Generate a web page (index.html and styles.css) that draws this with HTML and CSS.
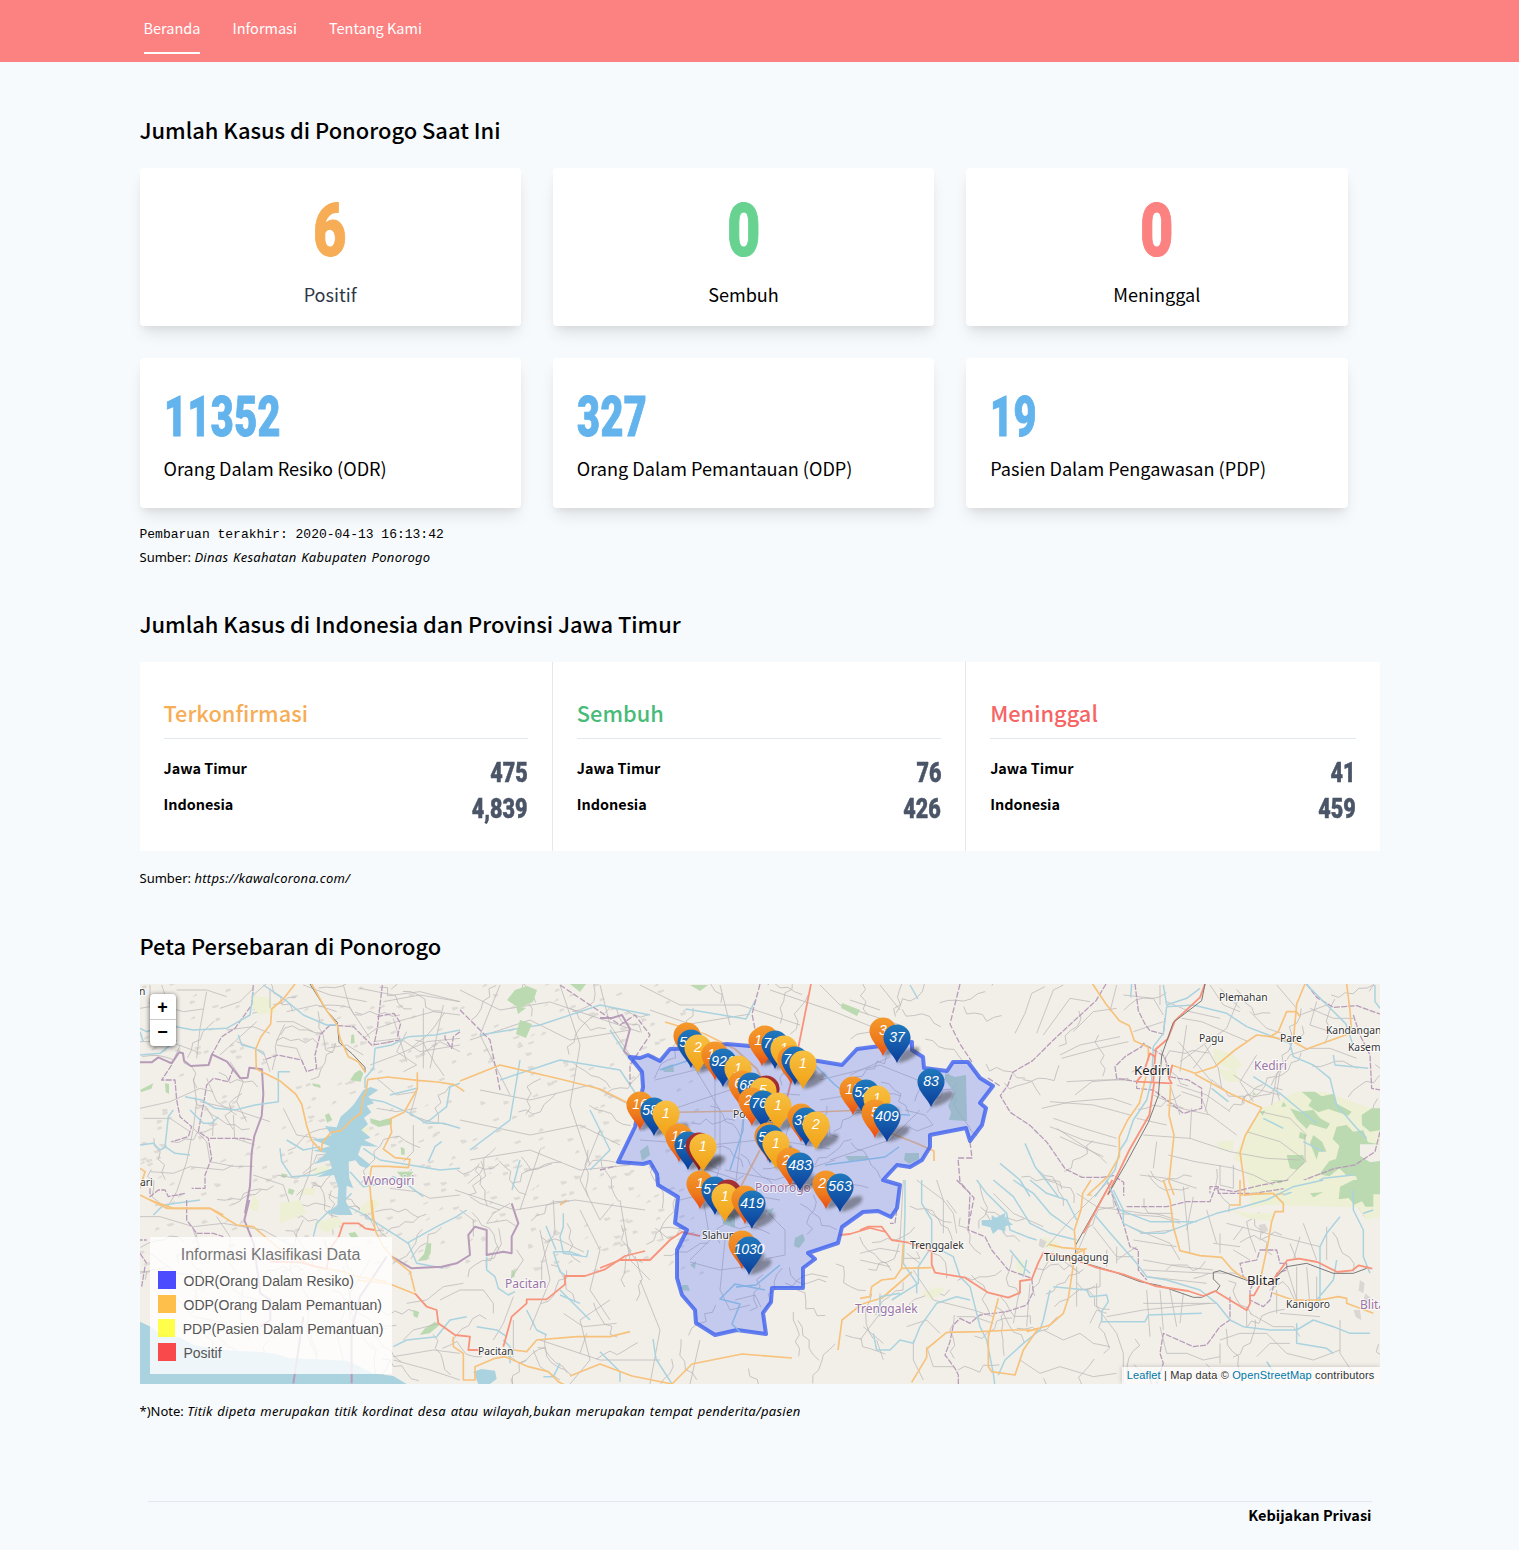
FILE: index.html
```html
<!DOCTYPE html>
<html lang="id">
<head>
<meta charset="utf-8">
<title>Ponorogo Covid-19</title>
<link rel="stylesheet" href="styles.css">
</head>
<body>
<header class="topbar">
  <nav class="wrap nav">
    <a class="nav-link active">Beranda</a>
    <a class="nav-link">Informasi</a>
    <a class="nav-link">Tentang Kami</a>
  </nav>
</header>
<main class="wrap">
  <h2 class="title"><span>Jumlah Kasus di Ponorogo Saat Ini</span></h2>
  <section class="cards">
    <div class="card big"><b class="num orange">6</b><span class="gray">Positif</span></div>
    <div class="card big"><b class="num green">0</b><span>Sembuh</span></div>
    <div class="card big"><b class="num red">0</b><span>Meninggal</span></div>
    <div class="card"><b class="num">11352</b><span>Orang Dalam Resiko (ODR)</span></div>
    <div class="card"><b class="num">327</b><span>Orang Dalam Pemantauan (ODP)</span></div>
    <div class="card"><b class="num">19</b><span>Pasien Dalam Pengawasan (PDP)</span></div>
  </section>
  <p class="updated">Pembaruan terakhir: 2020-04-13 16:13:42</p>
  <p class="source">Sumber: <em>Dinas Kesahatan Kabupaten Ponorogo</em></p>

  <h2 class="title second"><span>Jumlah Kasus di Indonesia dan Provinsi Jawa Timur</span></h2>
  <section class="panel">
    <div class="stat">
      <h3 class="c-orange">Terkonfirmasi</h3>
      <div class="row"><span>Jawa Timur</span><b>475</b></div>
      <div class="row"><span>Indonesia</span><b>4,839</b></div>
    </div>
    <div class="stat">
      <h3 class="c-green">Sembuh</h3>
      <div class="row"><span>Jawa Timur</span><b>76</b></div>
      <div class="row"><span>Indonesia</span><b>426</b></div>
    </div>
    <div class="stat">
      <h3 class="c-red">Meninggal</h3>
      <div class="row"><span>Jawa Timur</span><b>41</b></div>
      <div class="row"><span>Indonesia</span><b>459</b></div>
    </div>
  </section>
  <p class="source after-panel">Sumber: <em>https://kawalcorona.com/</em></p>

  <h2 class="title third"><span>Peta Persebaran di Ponorogo</span></h2>
  <section class="map">
    <svg class="canvas" viewBox="140 984 1240 400" width="1240" height="400">
      <defs>
        <linearGradient id="g-blue" x1="0" y1="0" x2="0" y2="1"><stop offset="0" stop-color="#2079bd"/><stop offset="1" stop-color="#0a3d9b"/></linearGradient>
        <linearGradient id="g-orange" x1="0" y1="0" x2="0" y2="1"><stop offset="0" stop-color="#f49a2b"/><stop offset=".6" stop-color="#ee7a1b"/><stop offset="1" stop-color="#e84a17"/></linearGradient>
        <linearGradient id="g-gold" x1="0" y1="0" x2="0" y2="1"><stop offset="0" stop-color="#f7c043"/><stop offset="1" stop-color="#f2a012"/></linearGradient>
        <linearGradient id="g-red" x1="0" y1="0" x2="0" y2="1"><stop offset="0" stop-color="#a83236"/><stop offset="1" stop-color="#7f1e24"/></linearGradient>
        <filter id="soft" x="-50%" y="-50%" width="200%" height="200%"><feGaussianBlur stdDeviation="1.6"/></filter>
      </defs>
      <rect x="140" y="984" width="1240" height="400" fill="#f2efe9"/>
      <g id="texture"></g>

      <!-- Wonogiri and the reservoir -->
      <g transform="translate(130 975) scale(.33333)">
        <path class="farm" d="M370 60l50 10 20 40-50 10-30-30zM670 440l50 20-10 20-40-5zM550 580l40-10 10 20-50 15zM520 640l40 0-10 20-40 0zM690 700l30-30 30 10-20 30-40 10zM370 660l20 20-10 30-20-10z"/>
        <path class="wood" d="M690 285l10 10-8 25-32-4 14-22zM720 430l30 8 10-4 26-6 0 20-40 8-24-12zM800 590l50 0-8 14-24 6zM585 420l12-5 10 20-16 8zM546 325l24 4 2 10-22-6zM30 345l40-20-6 16-30 10zM455 595l16 4-6 10-12-4zM812 515l12 6 0 18-10 0zM664 180l8-2 2 26-12 2zM476 640l18 6-6 14-14-6zM105 325l12 2 0 30-10-6z"/>
        <path class="minor" d="M30 100l60-10 70 20 60-8M60 30l0 60M95 30l20 60 10 70M140 45l90 0 60 20M230 50l-20 110-10 90M30 200l90 0 80 30M270 100l60-20 40-40M290 165l80-10 50 20M320 200l80 30 20 60M300 260l40 60-20 60 30 60M210 380l90 20 120 40M230 310l30 70 60 40M190 460l40 40 10 60 70 14 60 0M60 590l70 5 50-20 100 10 30-15M190 460l-20 100-30 90-30 50M190 310l10 70-10 80M30 400l90-20 90-40 40 10M40 430l80 0 60 40M310 420l4 70 60 20M460 400l40 80 60 10M550 500l-10 90-30 80-10 50M440 600l60 10 60-30M370 600l90 30 20 60M520 30l80 30 110 20M640 30l20 70 60 90M690 40l100 20 80-10 120 30M760 80l110-20 120 20M700 190l40-30 60-20 110-30 80 10M730 200l80-10 60 40 120-20M720 270l80-30 90-40 100-10M830 170l-30 60 60 40-40 20M870 240l60-40 60 30M740 400l60 10 60-10M860 350l-20 70 60 20 60 10M740 310l60 50 60-10M850 450l0 80-30 30M780 640l80 10 40 20 90-10M380 140l-110 100M470 110l90-20 60 20M420 100l0-60M440 140l50 0 60 30M590 220l60-10 50 30M440 210l60 10 20 50M880 100l0 180M940 90l-40 190M790 130l40 130"/>
        <path class="border" d="M370 30l-5 60-50 70-40 25-30 55M245 240l-10 30M757 30l-15 130-10 50M742 125l50-10 20 30-10 40M600 150l70 5 60 60M600 150l-30 30-15 60 5 40-30 10-15-35-70-15-45 15M730 210l80-15M990 170l-20 15-5 35-20-30 0-15M125 270l-30 45 40 0 5 60 10 50 35 30-10 30-50 15M310 280l-15 40-45-10-20 20-10 60-15 80 30 20 10 60-20 50 0 40-40 0M240 490l60 0 40 0 25 5M60 640l0 25 25-20 20 0 10 20 50-10"/>
        <path class="border solid" d="M30 262l35 0 20-15 40 18 22-33 12 3 3 22 20 16 54-3 10-32 45 22 40 50 22-2 5-30 38 5 4 75-5 65-22 60-8 50-5 100-15 82"/>
        <path class="river" d="M30 240l60-5 50-40M30 160l20 10 60-20 80 15 100-5 70-40 10-70M30 170l10 30M400 30l60 40 60 50 70 30 30 0M325 180l10 30 40 10 30 20M735 220l50-10 50-25 80-5 75-15M735 220l-5 60-25 30 0 30M480 290l-35 0 0 90-70 10-60 15-60-5-40-25-50-10M130 405l-15 20-10 90 30 20 45 5M30 510l40-5 20 20 20-10M470 495l50 30 50-10M450 520l5 40 30 45 70-5 60-20M780 360l80-20M700 370l60 10 80 35 50 30 50 0 50 15M990 325l-30 10-10 60-50 40-10 5M700 520l50 35 90 15 90 15 60-5M660 590l40 45 60-10 30-20 50 30 40 30M895 560l20-45 20-15M70 720l30-30 110-15M180 405l40 40 25 0 20-20"/>
        <path class="water" d="M700 345L722 336 745 345 715 365 732 385 710 392 724 412 702 428 714 448 694 465 722 488 702 495 745 515 694 512 684 540 722 570 710 580 690 572 676 556 656 560 658 610 670 640 700 652 650 632 648 680 668 720 625 720 590 715 622 690 625 640 612 600 560 607 606 580 598 556 550 568 590 534 548 527 600 514 545 493 580 490 604 480 585 453 620 457 632 425 655 405 672 388z"/>
        <path class="rail" d="M540 27l50 80 32 35 5 60 40 35 38 40 0 15"/>
        <path class="second" d="M495 27l-35 45-35 30-3 45-30 40-15 35 2 60 70 35 48 40 18 30 15 65 15 45 28 30 5-25 25-30 30-5 35-35 25-18 5-45 10-15 5-40 60-8 90 10 60 5 50 8 30 20M705 290l-20-30-30-15-25-55-8-40-32-43-45-80M862 292l0 50-40 70-42 20 5 40-25 50 35 26 45 5-5 25-60-4-50 0-7 40 10 120M30 660l80 40 130 0 40 20M30 580l15 10-15 50"/>
      </g>

      <!-- south-west coast and Pacitan -->
      <g transform="translate(130 1200) scale(.33333)">
        <path class="water" d="M30 365L62 380 90 400 150 412 190 435 280 450 380 455 440 462 480 475 560 478 650 482 690 500 730 520 790 528 830 552 30 552zM1030 515l25-8 40 5 5 25-20 15-35 0z"/>
        <path class="farm" d="M450 10l60-10 20 40-80 30zM550 70l70-20 20 20-50 30z"/>
        <path class="wood" d="M890 130l14 0-2 30-12 20-28 4 20-22zM885 385l30-20 14 10-30 25-30 5zM850 330l18 6-6 18-12-6zM655 100l20-4 10 14-20 6zM1145 210l10 2-2 20-10 0z"/>
        <path class="minor" d="M0 50l90 0 100 30 90-10 120 20 90 50M190 90l20 60 30 40M260 50l40 60 0 80 40 60-10 100 30 70M60 160l80 60 120 10 80 60 180 40M100 250l90 100 100 20M520 60l-20 40-20 110 60 90-10 100 30 70M640 200l20 90-40 110 20 80M720 180l-60 100 10 100 60 70M990 30l40 30 0 50M1070 70l60-10 30 20M1140 10l-50 30-20 30M1110 30l-60-20-30-20M1160 150l20 30-40 60M1270 0l5 100-20 30-20 60 0 60M830 310l60-10 50-40 60-10M930 300l60-30 70 0 30 40 0 30M820 420l30-30 80-20M790 470l120-20 80 10M790 480l110 30 90 30M1150 290l-30 80-30 50M1150 360l0 110M1410 60l40-50M1300 340l60 40 100-10M1210 450l20 50 60 40M1370 400l-20 60M1050 460l40-10 30 20"/>
        <path class="river" d="M635 10l30-30M600 30l-40 40-10 40M635 10l60 30 140 90 25 60 80 15M830 130l90-50 60-30 30-20M1300 40l0 40-10 30 10 50 70 10 5-20M1270 155l20 60 20 15M1270 155l50 0 40 15M1070 170l0 40 25 20 10 35 30 20 20-10M790 440l40-20 90-10 40-50 50-10M1040 380l60 10 30 20M1190 330l30 60 30 15M1290 285l60 25M1240 530l30 0 20-40M1410 455l60 60 0 30M1140 490l0-50-20-20"/>
        <path class="border solid" d="M358 0l-15 60 28 70 20 150 30 20 0 60-30 20M785 170l60 35 90-5 45-10 40-25-5-60 20-25 35 10 0 75 50-10 25 5 0-50 20-40-20-60M770 170l-40 60-40 60-25 100 0 160M520 350l-30 200"/>
        <path class="border" d="M170 0l0 60 30 40 50 0 30 10M20 120l30 0M30 160l20 30M45 200l-10 60"/>
        <path class="second" d="M60 0l70 25 110 0 80 50 50 5 70 60 30 20 80 40 90 15 40 15 90 15M725 0l10 90 25 50 30 35 50 40 15 60M680 240l100 12 75 30M970 410l0 30 30 20 0 80 35 0 0-40 60-25 30-5 70 30 60 15 30 30 20 10M1150 450l40 5 30-35 120-10 100 0 60-15M1310 0l-20 15"/>
        <path class="primary" d="M627 108l13-38 45 0 20 15 28 5M855 280l35 40 30 10 5 40 50 35 45 5-5 40 35 0M1120 440l25-90 45-40 0-12 60 0 55-45 0-25 60 0 60-20 60-40 60-15M420 185l90 2 80 20 10-60 28-40"/>
      </g>

      <!-- area between Pacitan and Ponorogo -->
      <g>
        <path class="minor" d="M460 990l40 20 50-8 60 20 30 10M470 1040l60-20 40 20 60-10M480 1090l50 10 60-15 40 20M460 1120l70 15 50-10 40 20M470 1160l60-10 50 20 50-5M455 1190l60 20 60-10 70 10M540 1230l10 50-20 50M580 1210l20 40-10 40 20 30M620 1200l10 60 20 20M610 1300l-30 20 10 40-20 24M640 1280l20 50-10 54M540 1340l60 20 60 0M700 1340l-10 44M500 985l-20 50 30 60M560 985l20 60-10 60 20 60M600 985l10 40 20 30M640 985l40 20 60 0 60 20M650 1010l40 14 60-10M720 985l10 40M770 990l60 20 50 20M820 985l20 20 60 20M850 1000l30 10M900 1010l-20-25M600 1130l-20 50 20 40M540 1150l-20 60"/>
        <path class="river" d="M480 1035l60-10 60-20 50 10M500 1080l60-20 60 10 20 30M470 1150l40-30 10-60M590 1110l20 40-20 20M610 1030l20 30M686 1009l60 10 10-20M560 1290l30 30M910 985l8 14M672 1384l-16-25-3-20M512 1190l8-30M556 1250l-10-24"/>
        <path class="wood" d="M515 990l12-4 10 4-4 12-14 6-12-8zM516 1006l10 2-8 6zM842 1003l18 7-3 6-16-8zM690 985l18 0-8 6zM520 1020l12 4-6 14-10-4zM570 984l16 0-6 8z"/>
        <path class="border" d="M460 1010l30 30 10 50M560 985l30 20 30 20 15-10 15 20-20 30 0 20M760 984l-8 30 4 20M600 1170l16-4M960 984l-10 40 10 20 12 18M988 1078l12 8M970 1142l2 16-14 0 2 24 14 16-6 30"/>
        <path class="border solid" d="M600 1018l12 0 10-3 8 14-6 22 6 6"/>
        <path class="second" d="M460 1081l40-16 60 14 40 10 30 15M665 1022l40 12 30 15 22 20 10 20M570 1376l30-12 32 12 40 8M672 1384l20-20 50-10 50 4M838 1350l4-30 20-16 20-6 30-26M890 1133l26 10 18 8 0 10M816 1112l50-2M640 1113l100-2M760 1150l-22 42-12 24"/>
        <path class="primary" d="M811 984l-4 20-6 30-8 40-10 40M840 1235l10-1 20-6 16 4M600 1268l20-8 30 0 20-20 12-8 18 4M780 1186l20-3 8 6"/>
      </g>

      <!-- Kediri -->
      <g transform="translate(1000 975) scale(.33333)">
        <path class="farm" d="M785 400l45-20 60-30 80 0 60 20 110 40 0 290-340-10-50 10 0-60-20-70-30-20 40-80zM640 220l60 20 30 30-30 20-60-30zM650 500l50-4 0 30-40 0zM650 280l60 10 10 30-40 0z"/>
        <path class="wood" d="M1010 455l30-5 20 20 30-4 14 36 36 6 0 150-20 0-10-24-30 10-12-40-30-4-20-20-30 24-30-6 30-40 20-6 10-40-20-20zM905 350l40 0 20 14 36-8 10 30 44 24-10 12-60-20-30 10-30-20 10-16zM870 400l30 10 40-6 20 26 30 16-10 16-50-14-10 14-30-30zM1085 420l30-20 25 0 0 66-30 4-24-20zM940 480l26 20 14 30-24 0-6 24-20-50zM860 540l50 0 4 24-24 20-20-4zM900 470l20 10-6 14-18-6zM780 410l16-4-8 16zM850 380l10 14-16 2zM760 350l8 8-10 4z"/>
        <path class="fill-bg" d="M1080 508l60 0 0 50-30 4-30-20z"/>
        <path class="minor" d="M45 175l30-60 20-60 40-20M110 175l50-130 30-15M130 180l80-110 60 10M180 240l60-30 120-25M185 250l110-30 90-20M220 170l60-60 70-10M225 360l50-40 110-10M125 400l90-20 120-10 60 20M150 380l130 10 110 30M160 430l90 30 100 30M150 455l100 40 100 20M180 485l130 60M170 460l130 85 20 20M200 320l100-5 90 0M370 60l90 10 30 50M350 30l-20 80M400 170l90-30M430 480l140 10 120 40 110 20 100 5M500 390l130 30 80 60M505 540l80 20 120 20M545 130l60 10 140 60M535 200l100 120-20 90M560 150l-20 140M640 200l-60 80M615 210l40 70 10 60M720 60l-40 100-140 100M750 110l50 50 60 20M830 30l60 70M770 240l-50 80 40 60M870 240l-40 60-15 90M870 240l60-20 60 0 80 30M930 100l70 30 60 0M500 80l70 30 90 20M470 500l-10 80M480 30l0 60M575 400l-5 90M660 570l0 60 40 10 0-70M410 430l90 20M420 600l80 10 90 30M780 410l90 20 50 50M630 30l40 60 50 20M950 80l-20 70 60 20M900 120l80-30M660 40l60 60M545 350l60 20 20 50M530 330l90 30 70 50M700 300l60 40 80 20M740 470l100 30 80 60M915 480l0 80-60 60M700 580l60 20 60 30M510 330l30 90M460 360l90 40"/>
        <path class="border" d="M318 27l-30 50-130 120-60 60-60 35-15 40-22 30 30 50 60 40 50 50 55 80 50 25 60 0 35-5 30 20 0 40M405 27l10 80 20 40 15 20 40 10 5-50M920 27l30 40 50 30 70-5 70 25M1060 120l20 60 30 60 5 100 25 5M1140 470l-15 60-60 40-60 10-80 30-70 30-90 15-110 0 0-20-25 0 0 20M430 205l-5 10-50 30-30 30 5 35 60 10 0 20 50 5 40 30 50 40 55-15 0-60-40-25-60-10-10-60-50-30z"/>
        <path class="river" d="M490 30l10 60 60-20 40-30M500 95l80-5 100 25 60 40 130 50 10 40 60 25 50 40 20 80 60 70 30 30M500 95l-10 80-30 40-5 100-15 60-40 60-20 60-20 30-15 60-60 80M395 27l-3 40M918 27l60 60 60 60 20 60M1000 240l5 30 100 10M1125 30l0 50 15 20M75 505l30 70 40 50 30 40M0 565l60 50 30 50M760 305l80 50 60 50 50 40M790 430l60 30M910 500l60 30M635 340l50 40M1060 600l-90 10-60 30-60 20"/>
        <path class="second" d="M278 27l40 60 40 50 30 15 15 45 42 20 0 40M275 660l-12 0 60-55 35-60 0-60 25-50 35-50 20-80M515 270l70 25 60-20 60-50 65-45 40 5 25-15 25-60 30 0 10 15M810 185l70 15 40 22 125-45M915 27l-25 60-10 110M1040 27l10 80 5 70M585 298l110 60 90 40-50 85-15 50 10 70 5 60M512 330l-5 90 15 60-15 140 15 40M735 660l50-5M820 660l30-5"/>
        <path class="primary" d="M615 27l-15 40-75 70-22 55-35 30-5 50M463 320l-15 100-60 105-65 135M410 320l105 5-8-15 10-40M410 320l20-25 20-60 15 10-5 75"/>
        <path class="rail" d="M615 27l-10 50-85 65-35 100-10 120-30 80-65 120-55 95"/>
      </g>

      <!-- Trenggalek, Tulungagung, Blitar -->
      <g transform="translate(860 1180) scale(.33333)">
        <path class="farm" d="M1220 0l180 0 160 60 0 50-40 10-40-60-60-20-60 30-60-30zM1110 90l60 10 70 0 0 24-80-10zM550 170l50 20-10 20-50-10zM185 340l50-20 20 10-40 30zM470 230l30 20-10 40-20-10z"/>
        <path class="wood" d="M1440 20l40-20 60 0 0 80-24 0-10-16-24 10-16-20-30 4zM1350 40l40-4-30 16zM1230 0l50 0-20 10z"/>
        <path class="built" d="M1195 135l20-4 10 20-20 12zM1500 300l14 10-4 30-14-8zM1480 390l20 0 4 30-16-8zM1516 340l16 14-8 20-14-10zM540 175l20 10-10 20-14-8z"/>
        <path class="minor" d="M130 0l-10 180M170 0l80 60 30 40 10 60M230 0l20 60 0 100M260 60l30 40M0 220l60-15 60 10M0 240l90 20M60 340l0 60-60 80M160 270l60 90 120 30 60 20M140 220l40 30M400 40l60 60 90 40M560 200l90-100 90-90M580 220l80 60M690 130l-40 90M700 140l70 90 50 0M770 200l0 50M650 40l60 40 140 20 90 0M770 100l130 10 60 20M810 140l120 50 30 50M840 160l100-10M820 180l130 20M850 240l110 20 100 10M850 270l200 10M860 290l180 20M650 260l0 120M660 330l60-10 0-60M710 310l0 70 60 80M480 320l-20 110M510 310l-10 130M740 410l110-20 200-20M860 330l10 140M900 330l10 120M930 330l20 110M970 340l-10 90M850 370l220 0M770 460l20 60 0 90M550 450l60 30 50-20 40 30 50 10M690 430l20-40 30 10M480 540l60 40 60-20 100 30 70-10M1080 480l60-20 80 0 60 60 80 20 80-30M1170 400l70 40 60 0 20 30M1100 130l160 40M1120 180l30-40M1060 190l80 10M1080 160l0 60M1120 210l50 30M970 20l20 200M1000 50l-20 100M1040 90l30 100M1260 170l120 30M1290 190l20 50M1320 170l-20 70M1330 130l40 110M1400 140l0 100M1280 260l30 100M1310 260l0 120M1340 260l10 120M1250 330l0 70M1160 380l0 60M1260 400l120 10M50 480l20 60M160 480l0 60 30 60M200 500l20 60 60 0M140 440l60-20 40 40M290 410l50 0 60 20M920 520l60 0 50 20 50-10M900 440l20 80M1190 530l40-40 60 0M1440 420l0 100 40 60M1080 490l0 60M10 440l60 50M1370 290l0 100M130 235l50 0-10-20M740 210l0 50M830 200l-60 40"/>
        <path class="border" d="M290 0l40 40-5 110 50 20 20 40 50 60 70 25 5 40-20 40-60 20-80 10-30 25-30-15-20 20-10 50-15 40 30 40 10 20 0 70M740 0l30 80 20 50 20 70 25 10 0 60 25 30M800 80l120 0 60-15 70 0 15-40 60 10 80-20 80-15M1200 210l50 0 10 40 20 0 0 20-30 10-20 80-20 20-40-20 0-30 10-20-30-20-10-40 50-10zM1110 350l0 70-30 20-40 55-40 5-90-40-10 60 10 30-20 60M110 90l-5 40-15 0"/>
        <path class="river" d="M135 0l0 100-5 150 40 60 0 30M185 0l0 70 30 50 0 80-40 60 0 50-80 50M350 0l30 40 60 60 10 50 50 20 30 10M400 0l60 50 50 80 60 30 80 20M460 0l60 40 50 60 70 50M510 0l50 40 60 20 30 60M220 200l60 30 20 60 30 30 30 120 20 40 20 100 5 40M180 440l-20 50-40-10-30 30-40 0-10-50M180 440l50-70 60-20 40 10M570 330l-20 90-10 30-50 40-55 50-20 45M580 320l100 10 10 20 50-5 5 20-20 30 0 30 130 0 10-20 160-5M760 30l30 60 0 40 60 30 60 0 80-30 80-30 80-20 70-20 80-40 90-20M700 100l60 70 70 80 30 40 60 10 100 30 50 40 40 50 40 20 80 10 80 0 50-30 60 20 50 20 60 0M1380 380l0-180 20-40 40-50M1430 240l-10 60-50 60M1480 30l0 60 30 60 0 80 20 50M1540 90l-30 10M1310 430l0 60 90 15 20 15M740 0l40 90 90 35 140 0M1220 545l20 30M440 110l-10 50M450 210l40 50 20 20M500 240l-10 50M60 410l0-60 60-10"/>
        <path class="water" d="M365 120l30 0 0-15 12 8 30-15-4 16 26 20-24 4 2 14-22-4-16 14-8-20-26-6z"/>
        <path class="rail" d="M757 0l-110 195 0 35M660 245l100 30 80 30 60 12 100 35 25 0 45-20 10-15-20-20 0-20 20-5 70 25 40 15M1240 300l40-40 60-10 80 30 60 0 40-15"/>
        <path class="second" d="M693 0l-25 40-5 50-20 60 4 60M567 193l40 10 65 5 0 25M680 205l-60 30 20 20-15 100-15 45-40 35-50 15-60 0-100 5-100 2-60 50 0 25-45 75M500 455l35-10-45 65-25 75-70-10-10-15 0-90 30-115M910 0l20 60 10 80 20 72 60 15 65 5 30 35 25 20 20 10M1140 0l0 75-30 0M1140 45l100-5 30 30 0 25-25 0-10 30-10 60-25 120M1240 340l60 20 80 0 55-10 25 5 0 15 80 30M130 190l-5 75 90-2M125 265l-20 30-40 5-30 20-5 30-30 5"/>
        <path class="primary" d="M0 150l25-10 40 0 30 40 50 8 70 25 0 40 10 25 90 15 70 45 60 15 35-15 0-35 35-5 20-50 15-30 80 15 80 30 80 20 95 35 100 15 45 15 35-15 95 58 10-20 0-25 12 0 20-35 25 5 55-75 35-5 55 10 60 30 45-5 20-15 40 10M757 0l-62 115-25 45"/>
      </g>

      <path class="region" d="M630 1057L640 1058L648 1055L660 1061L670 1049L700 1048L727 1044L750 1046L785 1046L800 1060L818 1061L842 1065L857 1049L880 1046L912 1042L912 1050L923 1057L924 1068L947 1071L953 1062L968 1062L980 1078L993 1086L980 1103L986 1108L982 1125L970 1141L966 1128L930 1135L930 1147L922 1160L910 1167L897 1165L883 1180L900 1185L897 1208L891 1217L878 1211L863 1212L842 1227L838 1243L808 1253L815 1259L803 1268L803 1288L772 1288L771 1302L763 1313L766 1334L737 1330L715 1335L696 1323L695 1310L682 1295L677 1278L677 1250L687 1230L675 1223L678 1197L658 1185L657 1174L650 1162L643 1164L618 1162L635 1127L643 1087L642 1072Z"/>
      <g class="inner">
        <path class="park" d="M945 1073l10 4 11-2 1 46-18-1 2-8-3-6 6-14-9-12zM905 1153l14 0 0 6-10 5-5-4zM845 1156l22 0 2 4-20 1zM640 1151l8-6 2 10-8 6zM662 1068l11-4 1 8-10 0zM690 1265l6-4-1 8zM795 1238l8-4 2 6-6 8-5-2zM766 1210l8-2-4 8zM682 1285l6 0 2 6-8-1zM725 1210l10 6 0 12-12-4z"/>
        <path class="minor" d="M655 1080l60-15 60 20M670 1110l60-20 70 5M690 1060l30 50 0 60M715 1060l0 80M640 1140l70 5 60-6 60 10M745 1100l-10 90M725 1170l50 10 60-20M680 1200l40-10 60 10M820 1080l60-15 50 20M820 1100l60-10M830 1160l60-20 30-30M905 1110l20 5 8 10-16 6-8-4M700 1180l10 60-20 20M765 1210l20 20 0 25-20 4M725 1240l-5 50 10 20 20-5M690 1262l30 8 30-4M735 1300l20-5 6 12M850 1075l40-18"/>
        <path class="river inner-river" d="M660 1070l30-10M745 1090l-2 40-13 40M765 1290l-30-6-15 15 20 5-8 20 8 8M780 1265l-24 20-20 2M825 1165l60-8 14-10M815 1065l20 20 20 15M860 1113l50 2M770 1160l30 20M830 1175l-20 10"/>
      </g>

      <g class="town">
        <text x="1219" y="1001">Plemahan</text><text x="1199" y="1042">Pagu</text><text x="1280" y="1042">Pare</text><text x="1326" y="1033.5">Kandangan</text><text x="1348" y="1051">Kasem</text>
        <text x="910" y="1248.5">Trenggalek</text><text x="1044" y="1261">Tulungagung</text><text x="1286" y="1308">Kanigoro</text><text x="478" y="1355">Pacitan</text><text x="702" y="1239">Slahung</text><text x="733" y="1118">Ponorogo</text><text x="140" y="1186">ari</text><text x="139" y="995">n</text>
        <text class="city" x="1134" y="1075">Kediri</text><text class="city" x="1247" y="1285">Blitar</text>
      </g>
      <g class="regency">
        <text x="363" y="1185">Wonogiri</text><text x="505" y="1288">Pacitan</text><text x="755" y="1192">Ponorogo</text><text x="855" y="1313">Trenggalek</text><text x="1254" y="1070">Kediri</text><text x="1360" y="1309">Blitar</text>
      </g>
      <g id="markers"></g>
    </svg>
    <div class="zoom"><a>+</a><a>−</a></div>
    <div class="legend">
      <h4>Informasi Klasifikasi Data</h4>
      <div><i class="k-blue"></i>ODR(Orang Dalam Resiko)</div>
      <div><i class="k-orange"></i>ODP(Orang Dalam Pemantuan)</div>
      <div><i class="k-yellow"></i>PDP(Pasien Dalam Pemantuan)</div>
      <div><i class="k-red"></i>Positif</div>
    </div>
    <div class="credit"><a>Leaflet</a> | Map data © <a>OpenStreetMap</a> contributors</div>
  </section>
  <p class="source note">*)Note: <em>Titik dipeta merupakan titik kordinat desa atau wilayah,bukan merupakan tempat penderita/pasien</em></p>
</main>
<footer class="wrap footer"><div><b>Kebijakan Privasi</b></div></footer>
<script src="map.js"></script>
</body>
</html>
```
FILE: styles.css
```css
* { box-sizing: border-box; }
body { margin: 0; background: #f7fafc; color: #000; font-family: "Noto Sans CJK JP", "Noto Sans", sans-serif; }
h2, h3, h4, p { margin: 0; }
.wrap { width: 1240px; margin: 0 auto; }
.topbar { height: 62px; background: #fc8181; }
.nav { display: flex; gap: 32px; padding-left: 4px; }
.nav-link { height: 54px; padding-top: 16px; color: #fff; font-size: 14.5px; line-height: 24px; border-bottom: 2px solid transparent; }
.nav-link.active { border-color: #fff; }
.title { height: 36px; margin: 50px 0 20px; font-size: 21.9px; line-height: 36px; font-weight: 500; white-space: nowrap; }
.title span, .num, .row b { display: inline-block; transform-origin: left center; }
.cards { display: grid; grid-template-columns: repeat(3, 1fr); grid-template-rows: 158px 150px; row-gap: 32px; }
.card { display: flex; flex-direction: column; margin-right: 32px; padding: 30px 24px 0; background: #fff; border-radius: 4px; box-shadow: 0 10px 15px -3px rgba(0,0,0,.1), 0 4px 6px -2px rgba(0,0,0,.05); font-size: 18.1px; line-height: 30px; }
.num { align-self: flex-start; height: 56px; font: 900 55px/58px Roboto, sans-serif; color: #63b3ed; letter-spacing: .6px; transform: scaleX(.72); -webkit-text-stroke: 1px currentColor; }
.card .num + span { margin-top: 9px; }
.big { align-items: center; padding-top: 24px; }
.big .num { align-self: center; height: 76px; font-size: 75px; line-height: 76px; letter-spacing: 0; transform: scaleX(.77); transform-origin: center; }
.card.big .num + span { margin-top: 11px; }
.orange { color: #f6ad55; }
.green { color: #68d391; }
.red { color: #fc8181; }
.gray { color: #2d3748; }
.updated { margin-top: 15px; font: 13px/24px "Liberation Mono", monospace; }
.source { font: 13px/22px "Noto Sans", sans-serif; white-space: nowrap; }
.source em { letter-spacing: .29px; word-spacing: 1px; }
.updated + .source { margin-top: -1px; }
.title.second { margin: 38px 0 20px; }
.panel { display: grid; grid-template-columns: repeat(3, 1fr); height: 189px; background: #fff; }
.stat { padding: 30px 24px 0; border-right: 1px solid #e2e8f0; }
.stat:last-child { border-right: 0; }
.stat h3 { height: 47px; margin-bottom: 15px; border-bottom: 1px solid #e2e8f0; font-size: 21.8px; line-height: 41px; font-weight: 500; }
.c-orange { color: #f6ad55; }
.c-green { color: #48bb78; }
.c-red { color: #f56565; }
.row { display: flex; justify-content: space-between; height: 36px; font-size: 14.4px; line-height: 27px; font-weight: 700; }
.row b { font: 900 28px/38px Roboto, sans-serif; color: #4a5568; transform: scaleX(.77); transform-origin: right center; -webkit-text-stroke: .5px currentColor; }
.after-panel { margin-top: 16px; }
.title.third { margin: 39px 0 20px; }
.map { position: relative; height: 400px; overflow: hidden; font-family: "Liberation Sans", Arial, sans-serif; }
.canvas { display: block; }
.canvas path { fill: none; stroke-linejoin: round; }
.canvas .minor { stroke: #bbb9b9; stroke-width: 2.3; }
.canvas > g:not([transform]) .minor { stroke-width: .8; }
.canvas .river { stroke: #aad3df; stroke-width: 4.5; }
.canvas > g:not([transform]) .river { stroke-width: 1.5; }
.canvas .border { stroke: #b79bb9; stroke-width: 3.8; stroke-dasharray: 18 4; }
.canvas > g:not([transform]) .border { stroke-width: 1.3; stroke-dasharray: 6 2; }
.canvas .border.solid { stroke-width: 6; stroke-dasharray: none; }
.canvas > g:not([transform]) .border.solid { stroke-width: 2; stroke-dasharray: none; }
.canvas .second { stroke: #f7c27b; stroke-width: 5; }
.canvas > g:not([transform]) .second { stroke-width: 1.7; }
.canvas .primary { stroke: #f8937c; stroke-width: 5.4; }
.canvas > g:not([transform]) .primary { stroke-width: 1.8; }
.canvas .rail { stroke: #777; stroke-width: 3; }
.canvas .water { fill: #aad3df; }
.canvas .wood { fill: #bcdab1; }
.canvas .farm { fill: #eef0d5; }
.canvas .built { fill: #d9d6d3; }
.canvas .fill-bg { fill: #f2efe9; }
.canvas .speck { fill: #dedbd6; }
.canvas .region { fill: #3355ff; fill-opacity: .24; stroke: #3358ef; stroke-opacity: .75; stroke-width: 4; }
.canvas .inner .park { fill: #8fb4c0; opacity: .75; }
.canvas .inner .minor { stroke: #9ea3c4; }
.canvas .inner .inner-river { stroke: #85b2e4; }
.town { font: 10.3px "Noto Sans", sans-serif; fill: #333; stroke: #fff; stroke-opacity: .75; stroke-width: 2px; paint-order: stroke; }
.town .city { font-size: 13.2px; fill: #222; }
.regency { font: 12px "Noto Sans", sans-serif; fill: #9a75a6; stroke: #fff; stroke-opacity: .7; stroke-width: 2px; paint-order: stroke; }
.pin-text { font: italic 14px "Liberation Sans", Arial, sans-serif; fill: #fff; text-anchor: middle; }
.zoom { position: absolute; left: 10px; top: 10px; width: 26px; height: 52px; background: #fff; border-radius: 4px; box-shadow: 0 1px 5px rgba(0,0,0,.65); }
.zoom a { display: block; height: 26px; text-align: center; font: bold 18px/26px "Liberation Sans", sans-serif; }
.zoom a:first-child { border-bottom: 1px solid #ccc; }
.zoom a + a { line-height: 24px; }
.legend { position: absolute; left: 10px; bottom: 10px; width: 242px; height: 137px; padding: 6px 8px; background: rgba(255,255,255,.8); color: #555; font-size: 14px; line-height: 20px; white-space: nowrap; }
.legend h4 { margin: 3px 0 7px; text-align: center; font-size: 16px; line-height: 18px; font-weight: 400; color: #777; }
.legend div { display: flex; height: 18px; margin-bottom: 6px; }
.legend i { width: 18px; height: 18px; margin-right: 8px; opacity: .7; }
.k-blue { background: #00f; }
.k-orange { background: #ffa500; }
.k-yellow { background: #ff0; }
.k-red { background: #f00; }
.credit { position: absolute; right: 0; bottom: 0; height: 17px; padding: 0 5px; background: rgba(255,255,255,.7); box-shadow: 0 0 5px rgba(0,0,0,.2); color: #333; font-size: 11px; line-height: 17px; letter-spacing: .16px; white-space: nowrap; }
.credit a { color: #0078a8; }
.note { margin-top: 16px; }
.footer { padding: 79px 8px 0; }
.footer div { height: 49px; border-top: 1px solid #e2e8f0; text-align: right; font-size: 14.5px; line-height: 25px; }
```
FILE: map.js
```js
const NS = 'http://www.w3.org/2000/svg';

// Pins: x and y of the tip, colour, label
const pins = [
  [883,1056,'orange','3'],[687,1061,'orange',''],[765,1064,'orange',''],[897,1063,'blue','37'],
  [762,1066,'orange','12'],[691,1068,'blue','512'],[775,1069,'blue','712'],[698,1073,'gold','2'],
  [784,1074,'gold','1'],[715,1080,'orange','12'],[791,1084,'orange',''],[795,1085,'blue','712'],
  [723,1087,'blue','921'],[803,1089,'gold','1'],[738,1094,'gold','1'],[931,1107,'blue','83'],
  [742,1109,'orange','60'],[751,1111,'blue','681'],[766,1114,'red',''],[853,1115,'orange','15'],
  [763,1116,'gold','5'],[866,1118,'blue','521'],[877,1124,'gold','1'],[752,1126,'orange','21'],
  [763,1129,'blue','761'],[640,1130,'orange','16'],[778,1131,'gold','1'],[654,1136,'blue','581'],
  [875,1138,'orange','5'],[666,1139,'gold','1'],[887,1142,'blue','409'],[801,1142,'orange',''],
  [806,1146,'blue','321'],[816,1150,'gold','2'],[768,1161,'orange',''],[679,1162,'orange','12'],
  [770,1163,'blue','512'],[776,1169,'gold','1'],[688,1170,'blue','140'],[699,1171,'red',''],
  [703,1172,'gold','1'],[790,1186,'orange','21'],[800,1191,'blue','483'],[700,1209,'orange','1'],
  [826,1209,'orange','21'],[840,1212,'blue','563'],[715,1215,'blue','571'],[728,1218,'red',''],
  [725,1222,'gold','1'],[745,1224,'orange',''],[752,1229,'blue','419'],[742,1269,'orange','1'],
  [749,1275,'blue','1030']
];

function add(parent, tag, attrs, text) {
  const el = document.createElementNS(NS, tag);
  for (const k in attrs) el.setAttribute(k, attrs[k]);
  if (text) el.textContent = text;
  parent.appendChild(el);
  return el;
}

const layer = document.getElementById('markers');
for (const [x, y] of pins) {
  add(layer, 'path', { d: `M${x} ${y}l4-10q9-7 17-6q4 4-3 9q-8 6-18 7z`, style: 'fill:#222;fill-opacity:.42', filter: 'url(#soft)' });
}
for (const [x, y, color, label] of pins) {
  add(layer, 'path', {
    d: `M${x} ${y}C${x - 3} ${y - 8} ${x - 13.6} ${y - 16} ${x - 13.6} ${y - 25}A13.6 13.6 0 0 1 ${x + 13.6} ${y - 25}C${x + 13.6} ${y - 16} ${x + 3} ${y - 8} ${x} ${y}Z`,
    style: `fill:url(#g-${color})`
  });
  if (label) add(layer, 'text', { x, y: y - 21, class: 'pin-text' }, label);
}

// Small built-up specks and short lanes scattered over the countryside
let seed = 7;
const rnd = () => (seed = (seed * 16807) % 2147483647) / 2147483647;
const texture = document.getElementById('texture');
let specks = '', lanes = '';
for (let i = 0; i < 420; i++) {
  const x = (140 + rnd() * 560).toFixed(1), y = (984 + rnd() * 290).toFixed(1);
  specks += `M${x} ${y}l${(2 + rnd() * 5).toFixed(1)} ${(-3 * rnd()).toFixed(1)}l${(rnd() * 2).toFixed(1)} 2l-5 2z`;
}
for (let i = 0; i < 260; i++) {
  let d = `M${(140 + rnd() * 1240).toFixed(1)} ${(984 + rnd() * 400).toFixed(1)}`;
  const a = rnd() * 6.28;
  for (let j = 0; j < 6; j++) {
    const b = a + (rnd() - .5) * 1.8;
    d += `l${(Math.cos(b) * 8).toFixed(1)} ${(Math.sin(b) * 8).toFixed(1)}`;
  }
  lanes += d;
}
add(texture, 'path', { d: specks, class: 'speck' });
add(texture, 'path', { d: lanes, class: 'minor' });
```
